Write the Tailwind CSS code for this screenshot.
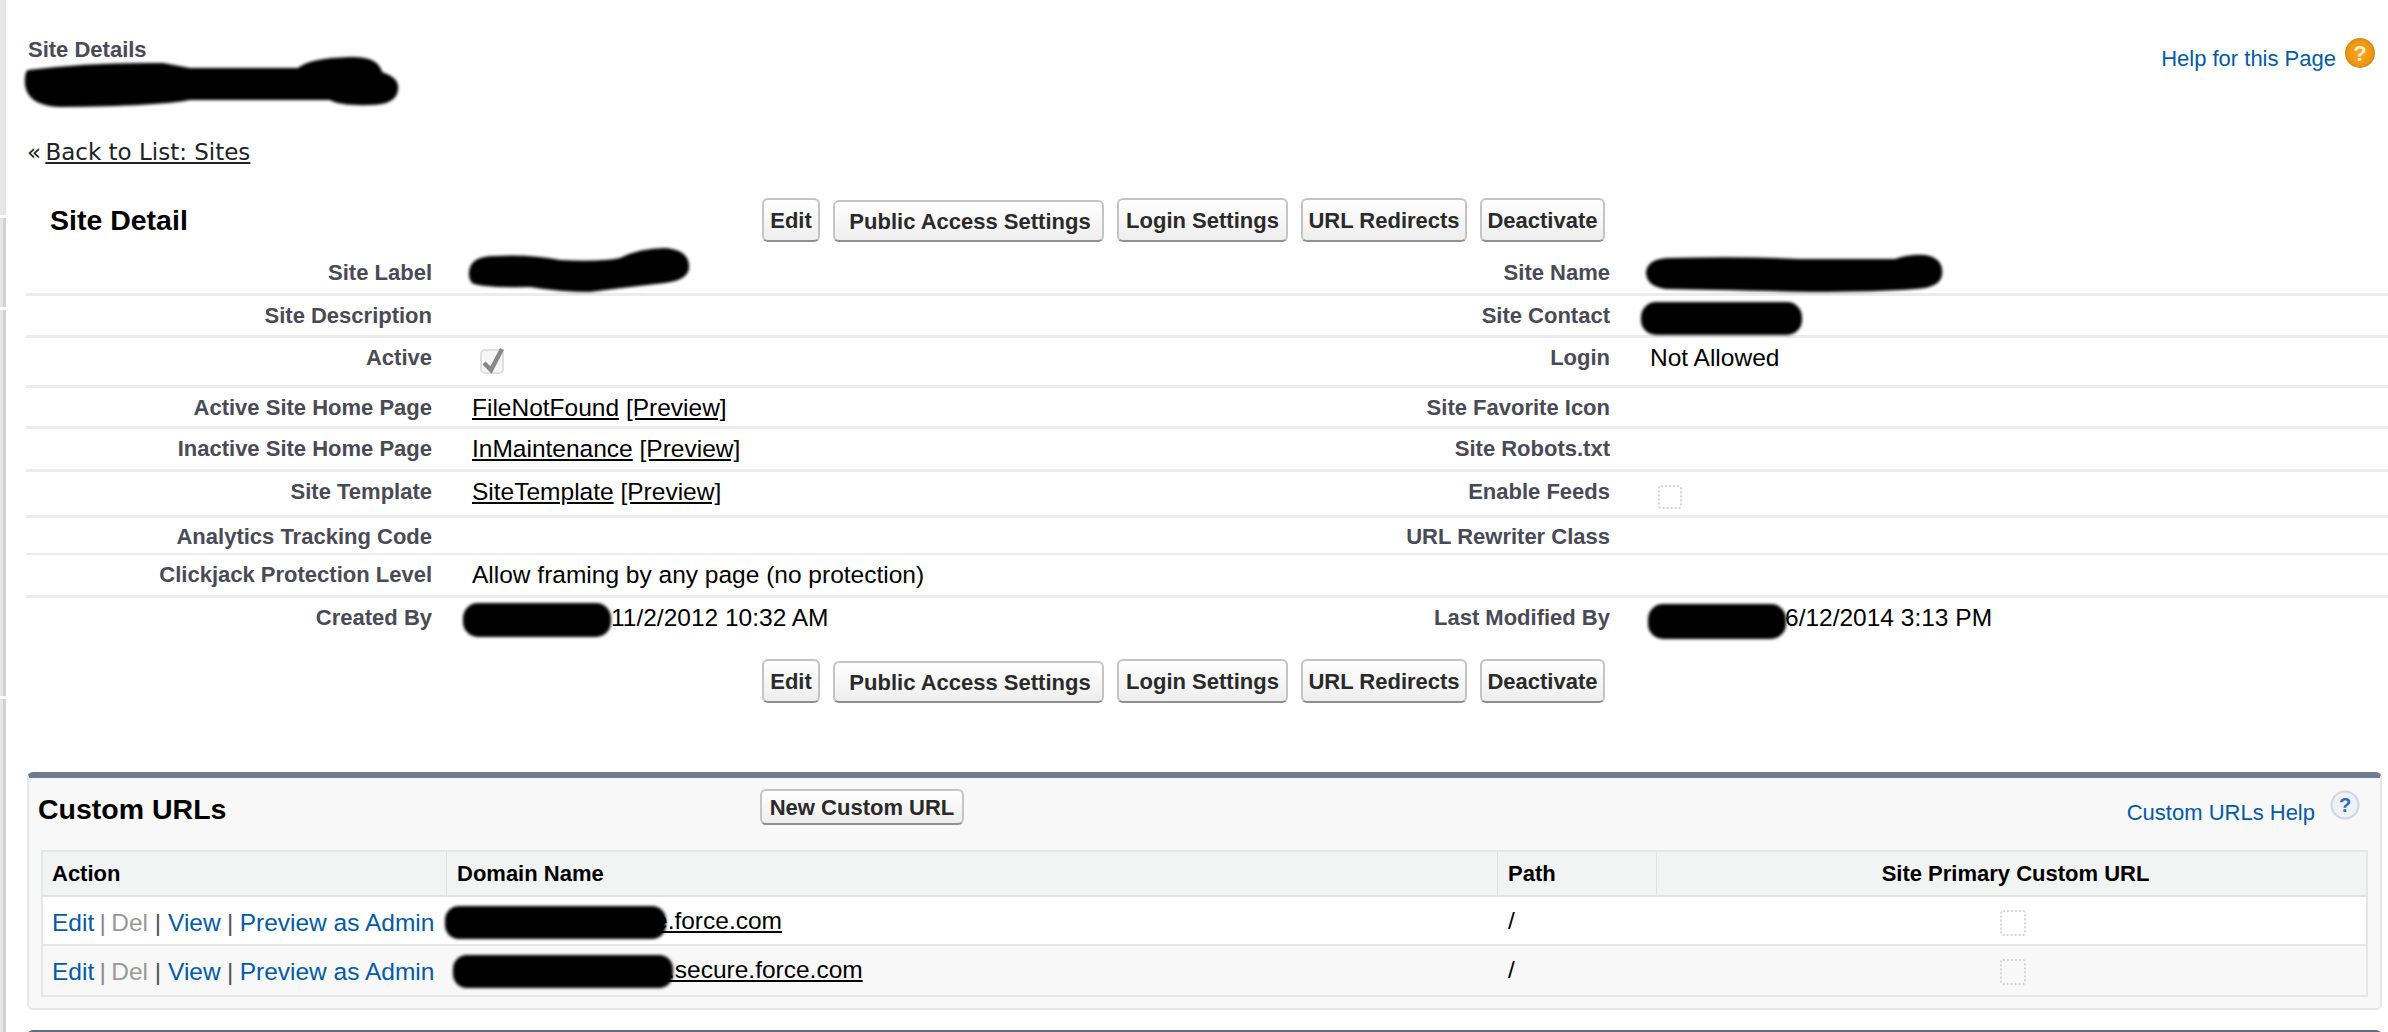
<!DOCTYPE html>
<html lang="en">
<head>
  <meta charset="UTF-8">
  <title>Site Details</title>
  <script src="https://cdn.jsdelivr.net/npm/@tailwindcss/browser@4"></script>
</head>
<body class="bg-white overflow-hidden font-['Liberation_Sans',Arial,sans-serif]">
<div class="relative w-[2388px] h-[1032px] overflow-hidden">

  <!-- Left edge strip -->
  <div class="absolute left-0 top-0 w-[6px] h-full flex flex-col gap-[3px]">
    <div class="h-[215px] bg-[#e6e6e6]"></div>
    <div class="h-[89px] bg-[#e6e6e6] border-r-[3px] border-[#d2d2d2]"></div>
    <div class="h-[386px] bg-[#e6e6e6] border-r-[3px] border-[#d2d2d2]"></div>
    <div class="flex-1 bg-[#e6e6e6] border-r-[3px] border-[#d2d2d2]"></div>
  </div>

  <!-- Page header -->
  <div class="flex justify-between pl-[28px] pr-[13px] h-[132px]">
    <div class="pt-[37px] text-[22px] leading-[26px] font-bold text-[#4a4a56]">Site Details</div>
    <div class="flex items-start gap-[9px] pt-[38px]">
      <a class="text-[#015ba7] text-[22px] leading-[42px]">Help for this Page</a>
      <svg width="30" height="30" viewBox="0 0 30 30">
        <defs><radialGradient id="orange" cx="50%" cy="50%" r="55%"><stop offset="0" stop-color="#f7a81f"/><stop offset="0.75" stop-color="#ee9614"/><stop offset="1" stop-color="#c97a12"/></radialGradient></defs>
        <circle cx="15" cy="15" r="15" fill="url(#orange)"/>
        <text x="15" y="23" text-anchor="middle" font-size="22" font-weight="700" fill="#fdeccd" font-family="Liberation Sans">?</text>
      </svg>
    </div>
  </div>

  <!-- Back link -->
  <div class="pl-[27px] h-[40px] text-[23px] leading-[40px] text-[#222] font-['DejaVu_Sans',sans-serif]"><span class="mr-[-3px]">«</span> <a class="underline">Back to List: Sites</a></div>

  <!-- Site Detail block -->
  <div class="ml-[26px] mt-[26px]">
    <div class="h-[44px] flex items-center">
      <h2 class="w-[736px] pl-[24px] text-[28.5px] font-bold text-black">Site Detail</h2>
      <div class="flex gap-[13px] text-[22px] font-bold text-[#2a2a2a]">
        <button class="h-[44px] w-[58px] rounded-[6px] border-2 border-[#c4c4c4] border-b-[#8f8f8f] bg-gradient-to-b from-white to-[#eeeeee]">Edit</button>
        <button class="mt-[2px] h-[42px] w-[271px] pl-[3px] rounded-[6px] border-2 border-[#c4c4c4] border-b-[#8f8f8f] bg-gradient-to-b from-white to-[#eeeeee]">Public Access Settings</button>
        <button class="h-[44px] w-[171px] rounded-[6px] border-2 border-[#c4c4c4] border-b-[#8f8f8f] bg-gradient-to-b from-white to-[#eeeeee]">Login Settings</button>
        <button class="h-[44px] w-[166px] rounded-[6px] border-2 border-[#c4c4c4] border-b-[#8f8f8f] bg-gradient-to-b from-white to-[#eeeeee]">URL Redirects</button>
        <button class="h-[44px] w-[125px] rounded-[6px] border-2 border-[#c4c4c4] border-b-[#8f8f8f] bg-gradient-to-b from-white to-[#eeeeee]">Deactivate</button>
      </div>
    </div>

    <div class="grid grid-cols-[406px_40px_698px_440px_1fr] text-[24.5px] leading-[26px] text-black">
      <div class="col-span-5 grid grid-cols-subgrid h-[54px] pt-[18px] border-b-[3px] border-[#ececec]">
        <div class="text-right font-bold text-[22px] text-[#4a4a56]">Site Label</div><div></div><div></div>
        <div class="text-right font-bold text-[22px] text-[#4a4a56]">Site Name</div><div></div>
      </div>
      <div class="col-span-5 grid grid-cols-subgrid h-[42px] pt-[7px] border-b-[3px] border-[#ececec]">
        <div class="text-right font-bold text-[22px] text-[#4a4a56]">Site Description</div><div></div><div></div>
        <div class="text-right font-bold text-[22px] text-[#4a4a56]">Site Contact</div><div></div>
      </div>
      <div class="col-span-5 grid grid-cols-subgrid h-[50px] pt-[7px] border-b-[3px] border-[#ececec]">
        <div class="text-right font-bold text-[22px] text-[#4a4a56]">Active</div><div></div>
        <div class="pt-[1px]"><svg class="ml-[8px]" width="25" height="28" viewBox="0 0 25 28" fill="none"><rect x="1" y="4" width="22" height="23" rx="4" fill="#f6f6f6" stroke="#e0e0e0" stroke-width="2"/><path d="M4 17l7 7 11-21" stroke="#888888" stroke-width="4.5"/></svg></div>
        <div class="text-right font-bold text-[22px] text-[#4a4a56]">Login</div><div class="pl-[40px]">Not Allowed</div>
      </div>
      <div class="col-span-5 grid grid-cols-subgrid h-[41px] pt-[7px] border-b-[3px] border-[#ececec]">
        <div class="text-right font-bold text-[22px] text-[#4a4a56]">Active Site Home Page</div><div></div>
        <div><a class="underline">FileNotFound</a> <a class="underline">[Preview]</a></div>
        <div class="text-right font-bold text-[22px] text-[#4a4a56]">Site Favorite Icon</div><div></div>
      </div>
      <div class="col-span-5 grid grid-cols-subgrid h-[43px] pt-[7px] border-b-[3px] border-[#ececec]">
        <div class="text-right font-bold text-[22px] text-[#4a4a56]">Inactive Site Home Page</div><div></div>
        <div><a class="underline">InMaintenance</a> <a class="underline">[Preview]</a></div>
        <div class="text-right font-bold text-[22px] text-[#4a4a56]">Site Robots.txt</div><div></div>
      </div>
      <div class="col-span-5 grid grid-cols-subgrid h-[46px] pt-[7px] border-b-[3px] border-[#ececec]">
        <div class="text-right font-bold text-[22px] text-[#4a4a56]">Site Template</div><div></div>
        <div><a class="underline">SiteTemplate</a> <a class="underline">[Preview]</a></div>
        <div class="text-right font-bold text-[22px] text-[#4a4a56]">Enable Feeds</div>
        <div class="pt-[6px]"><svg class="ml-[48px]" width="24" height="24" viewBox="0 0 24 24" fill="none"><rect x="1" y="1" width="22" height="22" rx="2" stroke="#d5d5d5" stroke-width="2" stroke-dasharray="2 2"/></svg></div>
      </div>
      <div class="col-span-5 grid grid-cols-subgrid h-[37px] pt-[6px] border-b-[2px] border-[#ececec]">
        <div class="text-right font-bold text-[22px] text-[#4a4a56]">Analytics Tracking Code</div><div></div><div></div>
        <div class="text-right font-bold text-[22px] text-[#4a4a56]">URL Rewriter Class</div><div></div>
      </div>
      <div class="col-span-5 grid grid-cols-subgrid h-[43px] pt-[7px] border-b-[3px] border-[#ececec]">
        <div class="text-right font-bold text-[22px] text-[#4a4a56]">Clickjack Protection Level</div><div></div>
        <div class="whitespace-nowrap">Allow framing by any page (no protection)</div>
        <div></div><div></div>
      </div>
      <div class="col-span-5 grid grid-cols-subgrid h-[43px] pt-[7px]">
        <div class="text-right font-bold text-[22px] text-[#4a4a56]">Created By</div><div></div>
        <div class="pl-[139px]">11/2/2012 10:32 AM</div>
        <div class="text-right font-bold text-[22px] text-[#4a4a56]">Last Modified By</div>
        <div class="pl-[175px]">6/12/2014 3:13 PM</div>
      </div>
    </div>

    <div class="h-[44px] mt-[18px] ml-[736px] flex gap-[13px] text-[22px] font-bold text-[#2a2a2a]">
      <button class="h-[44px] w-[58px] rounded-[6px] border-2 border-[#c4c4c4] border-b-[#8f8f8f] bg-gradient-to-b from-white to-[#eeeeee]">Edit</button>
      <button class="mt-[2px] h-[42px] w-[271px] pl-[3px] rounded-[6px] border-2 border-[#c4c4c4] border-b-[#8f8f8f] bg-gradient-to-b from-white to-[#eeeeee]">Public Access Settings</button>
      <button class="h-[44px] w-[171px] rounded-[6px] border-2 border-[#c4c4c4] border-b-[#8f8f8f] bg-gradient-to-b from-white to-[#eeeeee]">Login Settings</button>
      <button class="h-[44px] w-[166px] rounded-[6px] border-2 border-[#c4c4c4] border-b-[#8f8f8f] bg-gradient-to-b from-white to-[#eeeeee]">URL Redirects</button>
      <button class="h-[44px] w-[125px] rounded-[6px] border-2 border-[#c4c4c4] border-b-[#8f8f8f] bg-gradient-to-b from-white to-[#eeeeee]">Deactivate</button>
    </div>
  </div>

  <!-- Custom URLs panel -->
  <div class="mt-[69px] ml-[27px] mr-[6px] h-[238px] rounded-[6px] border-2 border-t-[6px] border-[#e4e6e8] border-t-[#6f7b92] bg-[#f8f8f8]">
    <div class="h-[72px] flex items-start">
      <h3 class="w-[731px] pl-[9px] pt-[14px] text-[28.5px] leading-[34px] font-bold text-black">Custom URLs</h3>
      <button class="mt-[11px] h-[36px] w-[204px] rounded-[6px] border-2 border-[#c4c4c4] border-b-[#8f8f8f] bg-gradient-to-b from-white to-[#eeeeee] text-[22px] font-bold text-[#2a2a2a]">New Custom URL</button>
      <div class="ml-auto mr-[20px] mt-[12px] flex items-start gap-[15px]">
        <a class="pt-[9px] text-[#015ba7] text-[22px] leading-[28px]">Custom URLs Help</a>
        <svg width="30" height="30" viewBox="0 0 30 30"><circle cx="15" cy="15" r="13.5" fill="#eef2f7" stroke="#d0d6de" stroke-width="2"/><text x="15" y="22" text-anchor="middle" font-size="20" font-weight="700" fill="#2a6fb5" font-family="Liberation Sans">?</text></svg>
      </div>
    </div>

    <div class="mx-[12px] border-2 border-[#e4e6e8] text-[24.5px] leading-[26px]">
      <div class="grid grid-cols-[404px_1051px_159px_1fr] h-[45px] bg-[#f2f3f3] border-b-2 border-[#e0e3e5] font-bold text-black text-[22px] items-center">
        <div class="pl-[9px] h-full flex items-center border-r border-[#e0e3e5]">Action</div>
        <div class="pl-[10px] h-full flex items-center border-r border-[#e0e3e5]">Domain Name</div>
        <div class="pl-[10px] h-full flex items-center border-r border-[#e0e3e5]">Path</div>
        <div class="pl-[8px] text-center">Site Primary Custom URL</div>
      </div>
      <div class="grid grid-cols-[404px_1051px_159px_1fr] h-[49px] bg-white border-b-2 border-[#e4e6e8] pt-[13px]">
        <div class="pl-[9px] whitespace-nowrap"><a class="text-[#015ba7]">Edit</a> <span class="text-[#888] mx-[-1.5px]">|</span> <span class="text-[#999]">Del</span> <span class="text-[#555]">|</span> <a class="text-[#015ba7]">View</a> <span class="text-[#555] mx-[-0.5px]">|</span> <a class="text-[#015ba7]">Preview as Admin</a></div>
        <div class="pl-[207px] -mt-[2px]"><a class="underline">e.force.com</a></div>
        <div class="pl-[10px] -mt-[2px]">/</div>
        <div class="flex justify-center pl-[2px]"><svg width="26" height="26" viewBox="0 0 26 26" fill="none"><rect x="1" y="1" width="24" height="24" rx="2" stroke="#d5d5d5" stroke-width="2" stroke-dasharray="2 2"/></svg></div>
      </div>
      <div class="grid grid-cols-[404px_1051px_159px_1fr] h-[49px] bg-[#f8f8f8] pt-[13px]">
        <div class="pl-[9px] whitespace-nowrap"><a class="text-[#015ba7]">Edit</a> <span class="text-[#888] mx-[-1.5px]">|</span> <span class="text-[#999]">Del</span> <span class="text-[#555]">|</span> <a class="text-[#015ba7]">View</a> <span class="text-[#555] mx-[-0.5px]">|</span> <a class="text-[#015ba7]">Preview as Admin</a></div>
        <div class="pl-[221px] -mt-[2px]"><a class="underline">.secure.force.com</a></div>
        <div class="pl-[10px] -mt-[2px]">/</div>
        <div class="flex justify-center pl-[2px]"><svg width="26" height="26" viewBox="0 0 26 26" fill="none"><rect x="1" y="1" width="24" height="24" rx="2" stroke="#d5d5d5" stroke-width="2" stroke-dasharray="2 2"/></svg></div>
      </div>
    </div>
  </div>

  <!-- Next panel top edge -->
  <div class="absolute left-[27px] right-[6px] top-[1030px] h-[6px] rounded-t-[6px] bg-[#5f6b80]"></div>

  <!-- Redaction marks drawn over the text -->
  <svg class="absolute left-0 top-0 pointer-events-none blur-[1.5px]" width="2388" height="1032" fill="#000">
    <path d="M28 70Q90 62 163 63L190 68H298Q310 58 350 57Q378 56 382 72Q400 78 398 90Q396 105 370 105Q340 106 330 100H190Q160 106 60 107Q28 106 25 85Q24 72 28 70Z"/>
    <path d="M469 272Q470 256 495 256Q530 254 560 260Q600 262 620 258Q640 248 665 248Q690 250 689 268Q688 280 665 283Q620 288 590 292Q560 292 530 287Q480 288 472 283Q468 278 469 272Z"/>
    <path d="M1646 272Q1648 258 1670 258Q1740 256 1800 259H1895Q1910 254 1925 255Q1944 258 1942 275Q1940 288 1915 289Q1880 292 1810 292Q1720 290 1665 289Q1646 286 1646 272Z"/>
    <rect x="1641" y="302" width="161" height="33" rx="15"/>
    <rect x="463" y="603" width="148" height="34" rx="15"/>
    <rect x="1648" y="604" width="138" height="35" rx="15"/>
    <rect x="445" y="906" width="221" height="33" rx="14"/>
    <rect x="453" y="955" width="220" height="33" rx="14"/>
  </svg>
</div>
</body>
</html>
